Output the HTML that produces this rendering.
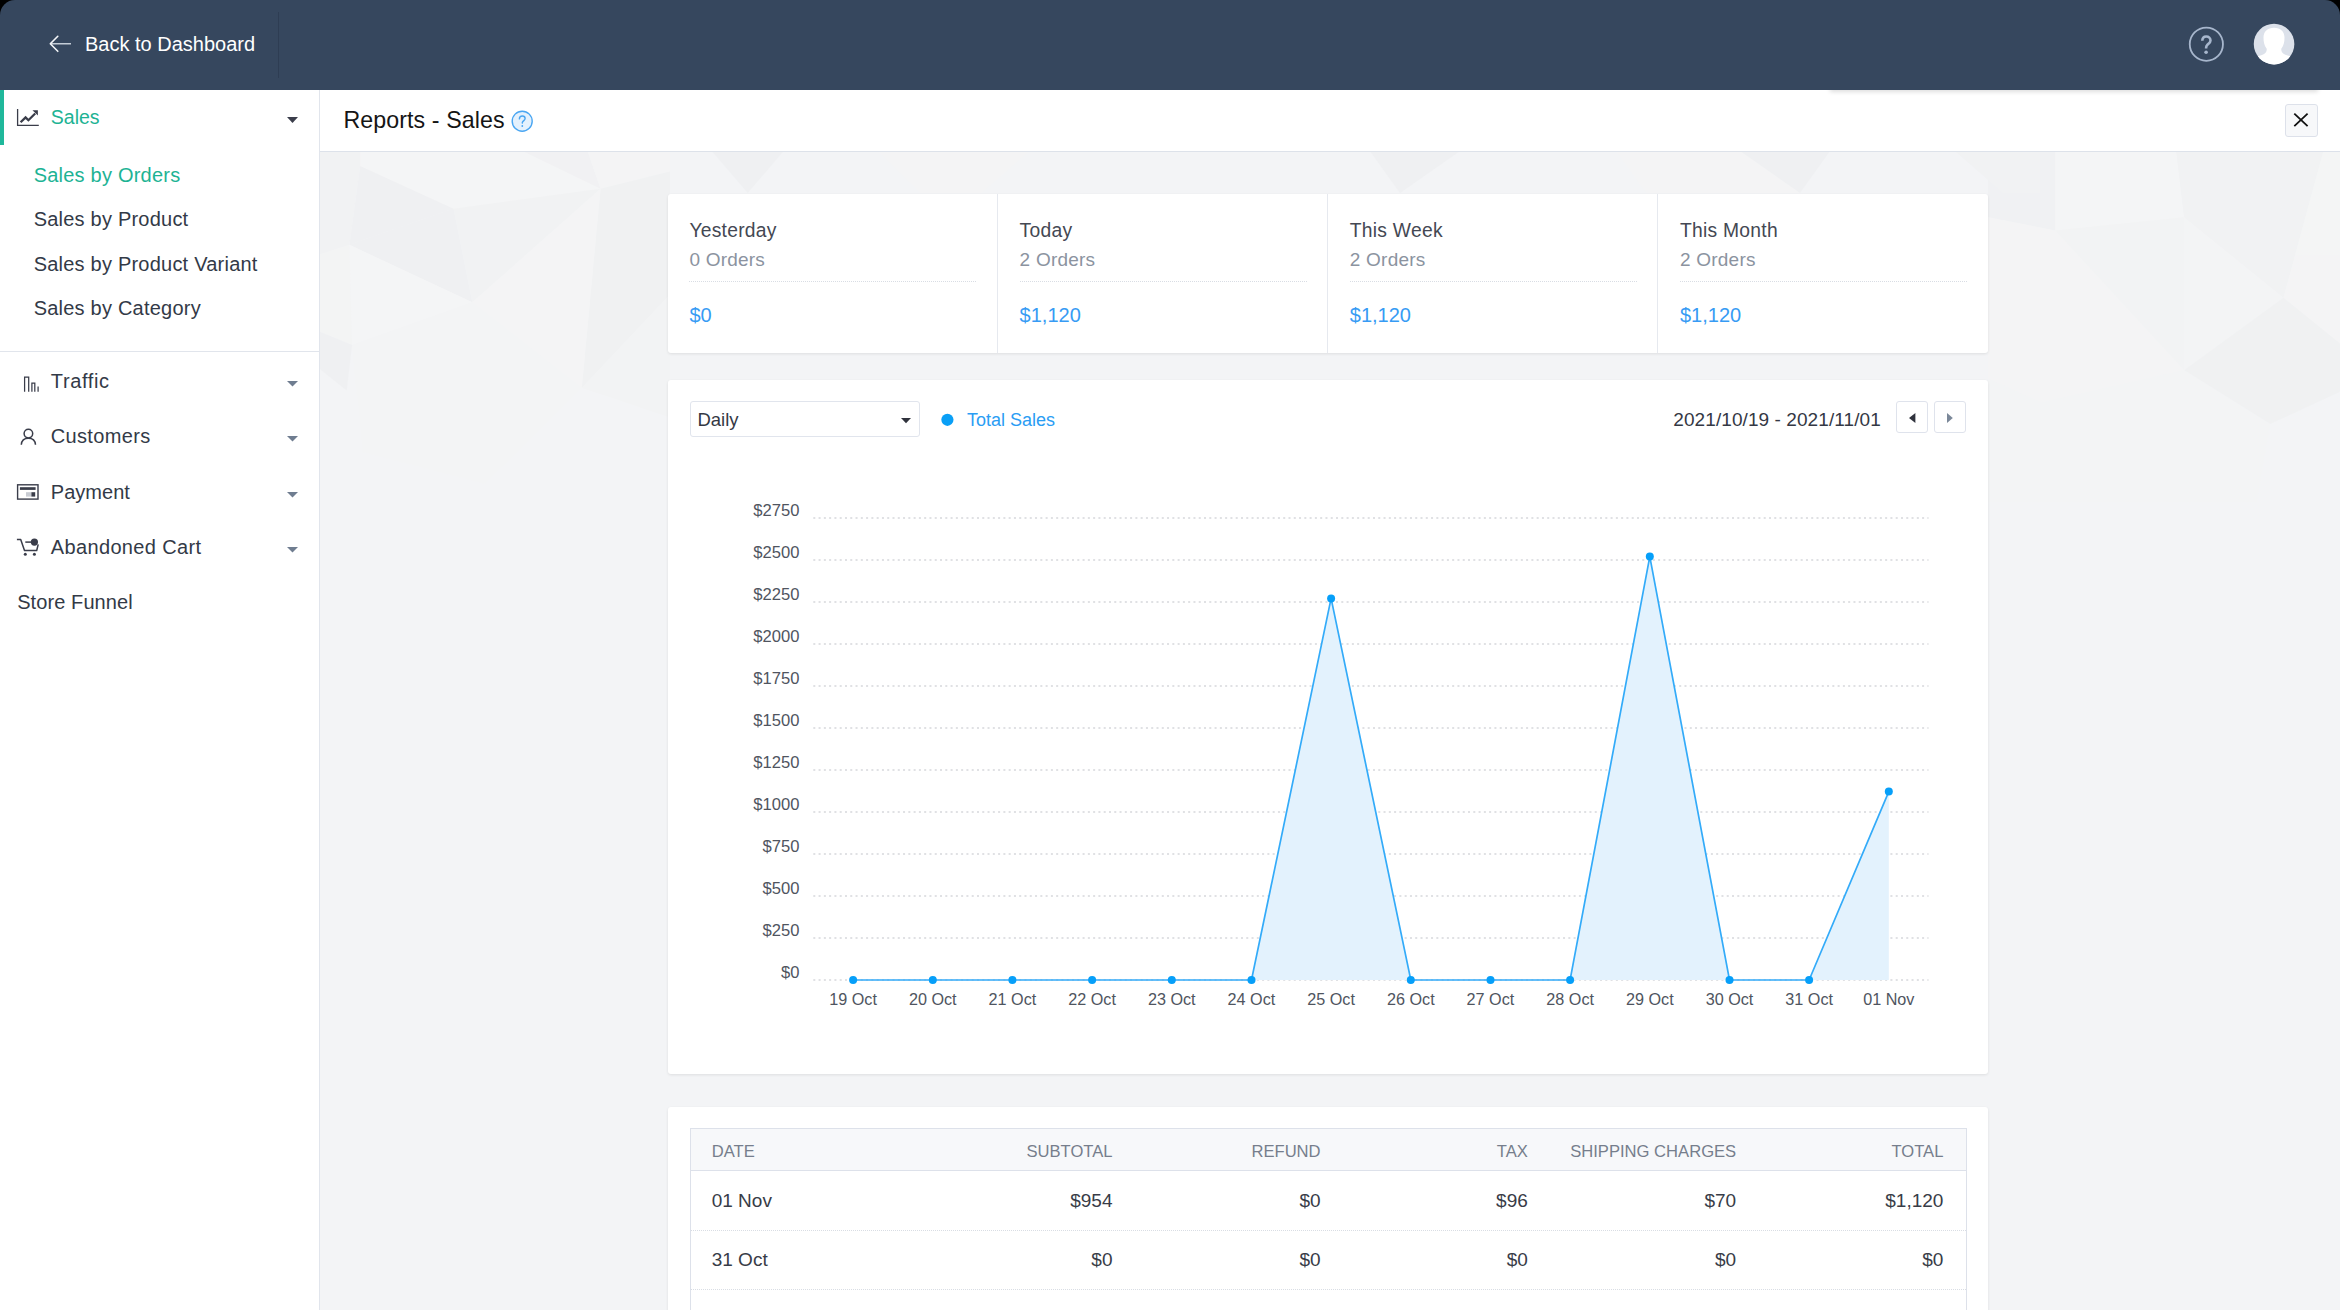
<!DOCTYPE html>
<html><head><meta charset="utf-8"><title>Reports - Sales</title>
<style>
html,body{margin:0;padding:0;}
body{width:2340px;height:1310px;overflow:hidden;position:relative;background:#000;font-family:"Liberation Sans",sans-serif;}
#app{position:absolute;left:0;top:0;width:2340px;height:1310px;background:transparent;overflow:hidden;border-radius:15px 15px 0 0;}
.t{position:absolute;white-space:nowrap;}
.r{position:absolute;box-sizing:border-box;}
svg.r{overflow:visible;}
</style></head><body><div id="app">
<div class="r" style="left:0px;top:90px;width:2340px;height:1220px;background:#f3f4f6;"></div>
<div class="r" style="left:0px;top:0px;width:2340px;height:90px;background:#36475e;"></div>
<svg class="r" style="left:44px;top:30px" width="32" height="28" viewBox="44 30 32 28">
<path d="M71 43.8 H51" stroke="#c3ccd6" stroke-width="1.6" fill="none"/>
<path d="M57.8 36.3 L50.3 43.8 L57.8 51.3" stroke="#f4f6f9" stroke-width="1.6" fill="none" stroke-linecap="round" stroke-linejoin="round"/>
</svg>
<div class="t" style="top:32.47px;font-size:20px;line-height:24.0px;color:#ffffff;left:85.00px;">Back to Dashboard</div>
<div class="r" style="left:278px;top:12px;width:1px;height:66px;background:#2e3d53;"></div>
<svg class="r" style="left:2186px;top:24px" width="40" height="40" viewBox="2186 24 40 40">
<circle cx="2206.35" cy="44.2" r="16.6" stroke="#a7b6cc" stroke-width="1.8" fill="none"/>
<path d="M2202.3 40.8 C2202.3 37.9 2204.1 36.5 2206.3 36.5 C2208.7 36.5 2210.5 38.1 2210.5 40.4 C2210.5 42.6 2208.6 43.6 2207.3 44.9 C2206.5 45.7 2206.1 46.6 2206.1 47.9 L2206.1 48.6" stroke="#a7b6cc" stroke-width="2.6" fill="none"/>
<circle cx="2206.1" cy="52.3" r="1.8" fill="#a7b6cc"/>
</svg>
<svg class="r" style="left:2252px;top:22px" width="44" height="44" viewBox="2252 22 44 44">
<defs><clipPath id="av"><circle cx="2274.05" cy="44.1" r="20.3"/></clipPath></defs>
<circle cx="2274.05" cy="44.1" r="20.3" fill="#dce1ea"/>
<g clip-path="url(#av)" fill="#ffffff">
<path d="M2274 27.7 C2280.5 27.7 2284.5 31.5 2284.5 37.5 C2284.5 42 2283.8 45.5 2281.3 48.8 C2281 51.5 2282.5 53.5 2286 55 C2290 56.3 2294 56.8 2296 57.2 L2296 70 L2252 70 L2252 57.2 C2254 56.8 2258 56.3 2262 55 C2265.5 53.5 2267 51.5 2266.7 48.8 C2264.2 45.5 2263.5 42 2263.5 37.5 C2263.5 31.5 2267.5 27.7 2274 27.7 Z"/>
</g>
</svg>
<div class="r" style="left:0px;top:90px;width:319px;height:1220px;background:#ffffff;"></div>
<div class="r" style="left:319px;top:90px;width:1px;height:1220px;background:#e1e5ec;"></div>
<div class="r" style="left:0px;top:90px;width:4px;height:55px;background:#1fb89b;"></div>
<svg class="r" style="left:15px;top:106px" width="28" height="22" viewBox="15 106 28 22">
<path d="M17.6 109 V125.3 H38.8" stroke="#3a3d4a" stroke-width="1.3" fill="none"/>
<path d="M20.6 122.3 L25.6 117.4 L28.4 120.2 L35.2 113.5" stroke="#3a3d4a" stroke-width="2.3" fill="none"/>
<path d="M32.5 110.2 H37.9 V115.6 Z" fill="#3a3d4a"/>
</svg>
<div class="t" style="top:105.54px;font-size:19.5px;line-height:23.4px;color:#1db394;left:50.80px;">Sales</div>
<svg class="r" style="left:287px;top:117px" width="11" height="6" viewBox="0 0 11 6"><path d="M0 0 H11 L5.5 6 Z" fill="#3b3e4b"/></svg>
<div class="t" style="top:162.77px;font-size:20px;line-height:24.0px;color:#1db394;letter-spacing:0.22px;left:33.70px;">Sales by Orders</div>
<div class="t" style="top:206.87px;font-size:20px;line-height:24.0px;color:#333a47;letter-spacing:0.22px;left:33.70px;">Sales by Product</div>
<div class="t" style="top:251.77px;font-size:20px;line-height:24.0px;color:#333a47;letter-spacing:0.22px;left:33.70px;">Sales by Product Variant</div>
<div class="t" style="top:295.87px;font-size:20px;line-height:24.0px;color:#333a47;letter-spacing:0.22px;left:33.70px;">Sales by Category</div>
<div class="r" style="left:0px;top:351px;width:319px;height:1px;background:#e1e5ec;"></div>
<div class="t" style="top:368.67px;font-size:20px;line-height:24.0px;color:#333a47;letter-spacing:0.62px;left:50.80px;">Traffic</div>
<svg class="r" style="left:287px;top:380.5px" width="11" height="5.5" viewBox="0 0 11 5.5"><path d="M0 0 H11 L5.5 5.5 Z" fill="#6f7d90"/></svg>
<div class="t" style="top:424.17px;font-size:20px;line-height:24.0px;color:#333a47;letter-spacing:0.33px;left:50.80px;">Customers</div>
<svg class="r" style="left:287px;top:436.1px" width="11" height="5.5" viewBox="0 0 11 5.5"><path d="M0 0 H11 L5.5 5.5 Z" fill="#6f7d90"/></svg>
<div class="t" style="top:479.77px;font-size:20px;line-height:24.0px;color:#333a47;letter-spacing:0.02px;left:50.80px;">Payment</div>
<svg class="r" style="left:287px;top:491.7px" width="11" height="5.5" viewBox="0 0 11 5.5"><path d="M0 0 H11 L5.5 5.5 Z" fill="#6f7d90"/></svg>
<div class="t" style="top:535.37px;font-size:20px;line-height:24.0px;color:#333a47;letter-spacing:0.35px;left:50.80px;">Abandoned Cart</div>
<svg class="r" style="left:287px;top:547.3px" width="11" height="5.5" viewBox="0 0 11 5.5"><path d="M0 0 H11 L5.5 5.5 Z" fill="#6f7d90"/></svg>
<svg class="r" style="left:20px;top:372px" width="22" height="22" viewBox="20 372 22 22">
<path d="M24.6 391.8 V377.2 H28.7 V391.8 M31.9 391.8 V383.1 H34.8 V391.8 M38.1 391.8 V386.6" stroke="#3a3d4a" stroke-width="1.25" fill="none"/>
</svg>
<svg class="r" style="left:18px;top:426px" width="22" height="22" viewBox="18 426 22 22">
<circle cx="28.4" cy="433.6" r="4.3" stroke="#3a3d4a" stroke-width="1.5" fill="none"/>
<path d="M21.3 444.8 C21.6 440.6 24.5 438.3 28.4 438.3 C32.3 438.3 35.2 440.6 35.5 444.8" stroke="#3a3d4a" stroke-width="1.5" fill="none"/>
</svg>
<svg class="r" style="left:15px;top:482px" width="26" height="20" viewBox="15 482 26 20">
<rect x="17.6" y="484.8" width="20.4" height="14.3" stroke="#3a3d4a" stroke-width="1.4" fill="none"/>
<rect x="19.9" y="487.2" width="15.7" height="2.7" fill="#3a3d4a"/>
<rect x="26" y="492.2" width="5.4" height="4.4" fill="#c9ccd3"/>
<rect x="31.4" y="492.2" width="3.8" height="4.4" fill="#3a3d4a"/>
</svg>
<svg class="r" style="left:15px;top:536px" width="26" height="22" viewBox="15 536 26 22">
<path d="M16.9 539.4 H20.7 L24.5 550.5 H36.7 L38.2 544.4" stroke="#3a3d4a" stroke-width="1.5" fill="none" stroke-linejoin="round"/>
<path d="M25.3 542.1 H32" stroke="#3a3d4a" stroke-width="1.5" fill="none"/>
<circle cx="34.4" cy="542.1" r="3.6" fill="#3a3d4a"/>
<circle cx="25.3" cy="554.3" r="1.5" fill="#3a3d4a"/>
<circle cx="34.4" cy="554.3" r="1.5" fill="#3a3d4a"/>
</svg>
<div class="t" style="top:589.67px;font-size:20px;line-height:24.0px;color:#333a47;letter-spacing:0.09px;left:17.20px;">Store Funnel</div>
<div class="r" style="left:320px;top:90px;width:2020px;height:61px;background:#ffffff;"></div>
<div class="r" style="left:320px;top:151px;width:2020px;height:1px;background:#dde2ea;"></div>
<div class="r" style="left:1800px;top:90px;width:540px;height:12px;overflow:hidden"><div class="r" style="left:30px;top:-10px;width:488px;height:10px;background:#36475e;box-shadow:0 2px 4px rgba(0,0,0,0.13)"></div></div>
<div class="t" style="top:106.54px;font-size:23.2px;line-height:27.84px;color:#151515;letter-spacing:0.1px;left:343.40px;">Reports - Sales</div>
<svg class="r" style="left:510px;top:109px" width="24" height="24" viewBox="510 109 24 24">
<circle cx="522.2" cy="121.2" r="10" stroke="#4aa6f2" stroke-width="1.4" fill="#e4f1fd"/>
<path d="M519.4 118.9 C519.4 116.9 520.7 116 522.3 116 C524 116 525.1 117.1 525.1 118.6 C525.1 120.2 523 120.7 522.4 122.3 L522.3 123.1" stroke="#4aa6f2" stroke-width="1.4" fill="none" stroke-linecap="round"/>
<circle cx="522.3" cy="126" r="0.9" fill="#4aa6f2"/>
</svg>
<div class="r" style="left:2284.5px;top:103.5px;width:33px;height:33px;background:#f7f8fa;border:1px solid #dde1ea;border-radius:3px;"></div>
<svg class="r" style="left:2290px;top:109px" width="22" height="22" viewBox="2290 109 22 22">
<path d="M2294.3 113.6 L2307.6 126.2 M2307.6 113.6 L2294.3 126.2" stroke="#111" stroke-width="1.8" fill="none"/>
</svg>
<svg class="r" style="left:0;top:152px;overflow:hidden;opacity:0.6" width="2340" height="1158" viewBox="0 152 2340 1158"><polygon points="320.0,150.0 360.1,150.0 360.1,166.0 349.4,244.8 320.0,254.2" fill="#f0f1f2"/><polygon points="360.1,150.0 587.2,150.0 600.5,188.7 453.6,208.8 360.1,166.0" fill="#f6f6f6"/><polygon points="520.4,150.0 587.2,150.0 600.5,188.7" fill="#f0f0f2"/><polygon points="360.1,166.0 453.6,208.8 349.4,244.8" fill="#eeeff1"/><polygon points="349.4,244.8 453.6,208.8 472.3,302.3" fill="#edeef0"/><polygon points="453.6,208.8 600.5,188.7 472.3,302.3" fill="#f1f2f2"/><polygon points="587.2,150.0 670.0,150.0 670.0,171.4 600.5,188.7" fill="#f5f5f5"/><polygon points="600.5,188.7 670.0,171.4 670.0,294.3 581.8,387.8" fill="#eff0f1"/><polygon points="600.5,188.7 581.8,387.8 472.3,302.3" fill="#f5f5f5"/><polygon points="320.0,254.2 349.4,244.8 352.1,345.0 320.0,331.7" fill="#f3f4f4"/><polygon points="349.4,244.8 472.3,302.3 352.1,345.0" fill="#f6f6f6"/><polygon points="352.1,345.0 472.3,302.3 581.8,387.8 485.6,484.0 362.7,451.9" fill="#f4f4f5"/><polygon points="320.0,331.7 352.1,345.0 346.7,390.4 320.0,369.1" fill="#eeeff1"/><polygon points="670.0,294.3 670.0,417.2 581.8,387.8" fill="#f2f3f3"/><polygon points="1988.0,150.0 2055.2,150.0 2055.2,230.6 1988.0,217.2" fill="#eff0f2"/><polygon points="2055.2,150.0 2176.1,150.0 2184.1,217.2 2055.2,230.6" fill="#f6f6f6"/><polygon points="2176.1,150.0 2323.8,150.0 2283.5,297.8 2184.1,217.2" fill="#f0f1f2"/><polygon points="2323.8,150.0 2340.0,150.0 2340.0,343.4 2283.5,297.8" fill="#f5f5f5"/><polygon points="2055.2,230.6 2184.1,217.2 2184.1,370.3" fill="#f2f3f3"/><polygon points="2184.1,217.2 2283.5,297.8 2184.1,370.3" fill="#f4f4f5"/><polygon points="2184.1,370.3 2283.5,297.8 2340.0,343.4 2340.0,391.8 2270.1,424.0" fill="#eff0f1"/><polygon points="1988.0,217.2 2055.2,230.6 2184.1,370.3 2041.7,402.6 1988.0,378.4" fill="#f5f5f5"/><polygon points="2041.7,402.6 2184.1,370.3 2270.1,424.0 2256.7,502.0 1988.0,502.0 1988.0,378.4" fill="#f3f4f5"/><polygon points="710.8,150.0 784.6,150.0 747.7,193.1" fill="#eeeff1"/><polygon points="876.9,150.0 1030.8,150.0 981.5,193.1 920.0,193.1" fill="#f5f5f5"/><polygon points="1369.2,150.0 1461.5,150.0 1400.0,193.1" fill="#eeeff1"/><polygon points="1615.4,150.0 1769.2,150.0 1800.0,193.1 1646.2,193.1" fill="#f5f5f5"/><polygon points="1738.5,150.0 1830.8,150.0 1800.0,193.1" fill="#eeeff1"/><polygon points="1953.8,150.0 2040.0,150.0 2040.0,193.1 2003.1,193.1" fill="#f0f1f2"/></svg>
<div class="r" style="left:668px;top:194px;width:1320px;height:159px;background:#fff;border-radius:3px;box-shadow:0 1px 3px rgba(0,0,0,0.09);"></div>
<div class="t" style="top:218.93px;font-size:19.3px;line-height:23.16px;color:#444853;letter-spacing:0.25px;left:689.40px;">Yesterday</div>
<div class="t" style="top:248.52px;font-size:19px;line-height:22.8px;color:#8b93a0;letter-spacing:0.22px;left:689.40px;">0 Orders</div>
<div class="r" style="left:689.4px;top:280.5px;width:287px;height:1px;border-top:1px dotted #d9dde4;height:0;"></div>
<div class="t" style="top:303.07px;font-size:20px;line-height:24.0px;color:#379bf4;left:689.40px;">$0</div>
<div class="r" style="left:997px;top:194px;width:1px;height:159px;background:#e6e9ef;"></div>
<div class="t" style="top:218.93px;font-size:19.3px;line-height:23.16px;color:#444853;letter-spacing:0.25px;left:1019.60px;">Today</div>
<div class="t" style="top:248.52px;font-size:19px;line-height:22.8px;color:#8b93a0;letter-spacing:0.22px;left:1019.60px;">2 Orders</div>
<div class="r" style="left:1019.5999999999999px;top:280.5px;width:287px;height:1px;border-top:1px dotted #d9dde4;height:0;"></div>
<div class="t" style="top:303.07px;font-size:20px;line-height:24.0px;color:#379bf4;left:1019.60px;">$1,120</div>
<div class="r" style="left:1327px;top:194px;width:1px;height:159px;background:#e6e9ef;"></div>
<div class="t" style="top:218.93px;font-size:19.3px;line-height:23.16px;color:#444853;letter-spacing:0.25px;left:1349.80px;">This Week</div>
<div class="t" style="top:248.52px;font-size:19px;line-height:22.8px;color:#8b93a0;letter-spacing:0.22px;left:1349.80px;">2 Orders</div>
<div class="r" style="left:1349.8px;top:280.5px;width:287px;height:1px;border-top:1px dotted #d9dde4;height:0;"></div>
<div class="t" style="top:303.07px;font-size:20px;line-height:24.0px;color:#379bf4;left:1349.80px;">$1,120</div>
<div class="r" style="left:1657px;top:194px;width:1px;height:159px;background:#e6e9ef;"></div>
<div class="t" style="top:218.93px;font-size:19.3px;line-height:23.16px;color:#444853;letter-spacing:0.25px;left:1680.00px;">This Month</div>
<div class="t" style="top:248.52px;font-size:19px;line-height:22.8px;color:#8b93a0;letter-spacing:0.22px;left:1680.00px;">2 Orders</div>
<div class="r" style="left:1680.0px;top:280.5px;width:287px;height:1px;border-top:1px dotted #d9dde4;height:0;"></div>
<div class="t" style="top:303.07px;font-size:20px;line-height:24.0px;color:#379bf4;left:1680.00px;">$1,120</div>
<div class="r" style="left:668px;top:380px;width:1320px;height:694px;background:#fff;border-radius:3px;box-shadow:0 1px 3px rgba(0,0,0,0.09);"></div>
<div class="r" style="left:690px;top:401px;width:230px;height:36px;border:1px solid #e1e5ed;border-radius:3px;background:#fff;"></div>
<div class="t" style="top:408.99px;font-size:18.5px;line-height:22.2px;color:#343844;left:697.40px;">Daily</div>
<svg class="r" style="left:901px;top:417.7px" width="10" height="5.2" viewBox="0 0 10 5.2"><path d="M0 0 H10 L5.0 5.2 Z" fill="#2f323c"/></svg>
<svg class="r" style="left:940px;top:413px" width="15" height="15" viewBox="940 413 15 15"><circle cx="947.4" cy="419.8" r="6.1" fill="#0a9ff6"/></svg>
<div class="t" style="top:409.56px;font-size:18px;line-height:21.6px;color:#2a9df4;left:966.90px;">Total Sales</div>
<div class="t" style="top:408.52px;font-size:19px;line-height:22.8px;color:#343844;letter-spacing:0.08px;left:1280.80px;width:600px;text-align:right;">2021/10/19 - 2021/11/01</div>
<div class="r" style="left:1896px;top:401px;width:32px;height:32px;border:1px solid #dfe3ec;border-radius:3px;background:#fff;"></div>
<div class="r" style="left:1934.3px;top:401px;width:32px;height:32px;border:1px solid #dfe3ec;border-radius:3px;background:#fff;"></div>
<svg class="r" style="left:1905px;top:410px" width="60" height="16" viewBox="1905 410 60 16"><path d="M1915.4 413 V423 L1909 418 Z" fill="#2f323c"/><path d="M1947 413 V423 L1952.8 418 Z" fill="#7b8899"/></svg>
<svg class="r" style="left:0;top:0" width="2340" height="1310" viewBox="0 0 2340 1310">
<line x1="813.3" y1="980.0" x2="1928.5" y2="980.0" stroke="#e0e1e4" stroke-width="2" stroke-dasharray="2 3.28"/>
<line x1="813.3" y1="938.0" x2="1928.5" y2="938.0" stroke="#e0e1e4" stroke-width="2" stroke-dasharray="2 3.28"/>
<line x1="813.3" y1="896.0" x2="1928.5" y2="896.0" stroke="#e0e1e4" stroke-width="2" stroke-dasharray="2 3.28"/>
<line x1="813.3" y1="854.0" x2="1928.5" y2="854.0" stroke="#e0e1e4" stroke-width="2" stroke-dasharray="2 3.28"/>
<line x1="813.3" y1="812.0" x2="1928.5" y2="812.0" stroke="#e0e1e4" stroke-width="2" stroke-dasharray="2 3.28"/>
<line x1="813.3" y1="770.0" x2="1928.5" y2="770.0" stroke="#e0e1e4" stroke-width="2" stroke-dasharray="2 3.28"/>
<line x1="813.3" y1="728.0" x2="1928.5" y2="728.0" stroke="#e0e1e4" stroke-width="2" stroke-dasharray="2 3.28"/>
<line x1="813.3" y1="686.0" x2="1928.5" y2="686.0" stroke="#e0e1e4" stroke-width="2" stroke-dasharray="2 3.28"/>
<line x1="813.3" y1="644.0" x2="1928.5" y2="644.0" stroke="#e0e1e4" stroke-width="2" stroke-dasharray="2 3.28"/>
<line x1="813.3" y1="602.0" x2="1928.5" y2="602.0" stroke="#e0e1e4" stroke-width="2" stroke-dasharray="2 3.28"/>
<line x1="813.3" y1="560.0" x2="1928.5" y2="560.0" stroke="#e0e1e4" stroke-width="2" stroke-dasharray="2 3.28"/>
<line x1="813.3" y1="518.0" x2="1928.5" y2="518.0" stroke="#e0e1e4" stroke-width="2" stroke-dasharray="2 3.28"/>
<polygon points="853.1,980.0 853.1,980.0 932.8,980.0 1012.4,980.0 1092.1,980.0 1171.8,980.0 1251.5,980.0 1331.1,598.4 1410.8,980.0 1490.5,980.0 1570.1,980.0 1649.8,556.6 1729.5,980.0 1809.1,980.0 1888.8,791.6 1888.8,980.0" fill="#e3f2fd"/>
<polyline points="853.1,980.0 932.8,980.0 1012.4,980.0 1092.1,980.0 1171.8,980.0 1251.5,980.0 1331.1,598.4 1410.8,980.0 1490.5,980.0 1570.1,980.0 1649.8,556.6 1729.5,980.0 1809.1,980.0 1888.8,791.6" fill="none" stroke="#33abf9" stroke-width="1.7" stroke-linejoin="miter"/>
<circle cx="853.1" cy="980.0" r="4" fill="#069ff9"/>
<circle cx="932.8" cy="980.0" r="4" fill="#069ff9"/>
<circle cx="1012.4" cy="980.0" r="4" fill="#069ff9"/>
<circle cx="1092.1" cy="980.0" r="4" fill="#069ff9"/>
<circle cx="1171.8" cy="980.0" r="4" fill="#069ff9"/>
<circle cx="1251.5" cy="980.0" r="4" fill="#069ff9"/>
<circle cx="1331.1" cy="598.4" r="4" fill="#069ff9"/>
<circle cx="1410.8" cy="980.0" r="4" fill="#069ff9"/>
<circle cx="1490.5" cy="980.0" r="4" fill="#069ff9"/>
<circle cx="1570.1" cy="980.0" r="4" fill="#069ff9"/>
<circle cx="1649.8" cy="556.6" r="4" fill="#069ff9"/>
<circle cx="1729.5" cy="980.0" r="4" fill="#069ff9"/>
<circle cx="1809.1" cy="980.0" r="4" fill="#069ff9"/>
<circle cx="1888.8" cy="791.6" r="4" fill="#069ff9"/>
</svg>
<div class="t" style="top:963.29px;font-size:16.6px;line-height:19.92px;color:#50555f;left:199.50px;width:600px;text-align:right;">$0</div>
<div class="t" style="top:921.29px;font-size:16.6px;line-height:19.92px;color:#50555f;left:199.50px;width:600px;text-align:right;">$250</div>
<div class="t" style="top:879.29px;font-size:16.6px;line-height:19.92px;color:#50555f;left:199.50px;width:600px;text-align:right;">$500</div>
<div class="t" style="top:837.29px;font-size:16.6px;line-height:19.92px;color:#50555f;left:199.50px;width:600px;text-align:right;">$750</div>
<div class="t" style="top:795.29px;font-size:16.6px;line-height:19.92px;color:#50555f;left:199.50px;width:600px;text-align:right;">$1000</div>
<div class="t" style="top:753.29px;font-size:16.6px;line-height:19.92px;color:#50555f;left:199.50px;width:600px;text-align:right;">$1250</div>
<div class="t" style="top:711.29px;font-size:16.6px;line-height:19.92px;color:#50555f;left:199.50px;width:600px;text-align:right;">$1500</div>
<div class="t" style="top:669.29px;font-size:16.6px;line-height:19.92px;color:#50555f;left:199.50px;width:600px;text-align:right;">$1750</div>
<div class="t" style="top:627.29px;font-size:16.6px;line-height:19.92px;color:#50555f;left:199.50px;width:600px;text-align:right;">$2000</div>
<div class="t" style="top:585.29px;font-size:16.6px;line-height:19.92px;color:#50555f;left:199.50px;width:600px;text-align:right;">$2250</div>
<div class="t" style="top:543.29px;font-size:16.6px;line-height:19.92px;color:#50555f;left:199.50px;width:600px;text-align:right;">$2500</div>
<div class="t" style="top:501.29px;font-size:16.6px;line-height:19.92px;color:#50555f;left:199.50px;width:600px;text-align:right;">$2750</div>
<div class="t" style="top:990.07px;font-size:16.2px;line-height:19.44px;color:#4f5560;left:553.10px;width:600px;text-align:center;">19 Oct</div>
<div class="t" style="top:990.07px;font-size:16.2px;line-height:19.44px;color:#4f5560;left:632.77px;width:600px;text-align:center;">20 Oct</div>
<div class="t" style="top:990.07px;font-size:16.2px;line-height:19.44px;color:#4f5560;left:712.44px;width:600px;text-align:center;">21 Oct</div>
<div class="t" style="top:990.07px;font-size:16.2px;line-height:19.44px;color:#4f5560;left:792.11px;width:600px;text-align:center;">22 Oct</div>
<div class="t" style="top:990.07px;font-size:16.2px;line-height:19.44px;color:#4f5560;left:871.78px;width:600px;text-align:center;">23 Oct</div>
<div class="t" style="top:990.07px;font-size:16.2px;line-height:19.44px;color:#4f5560;left:951.45px;width:600px;text-align:center;">24 Oct</div>
<div class="t" style="top:990.07px;font-size:16.2px;line-height:19.44px;color:#4f5560;left:1031.12px;width:600px;text-align:center;">25 Oct</div>
<div class="t" style="top:990.07px;font-size:16.2px;line-height:19.44px;color:#4f5560;left:1110.79px;width:600px;text-align:center;">26 Oct</div>
<div class="t" style="top:990.07px;font-size:16.2px;line-height:19.44px;color:#4f5560;left:1190.46px;width:600px;text-align:center;">27 Oct</div>
<div class="t" style="top:990.07px;font-size:16.2px;line-height:19.44px;color:#4f5560;left:1270.13px;width:600px;text-align:center;">28 Oct</div>
<div class="t" style="top:990.07px;font-size:16.2px;line-height:19.44px;color:#4f5560;left:1349.80px;width:600px;text-align:center;">29 Oct</div>
<div class="t" style="top:990.07px;font-size:16.2px;line-height:19.44px;color:#4f5560;left:1429.47px;width:600px;text-align:center;">30 Oct</div>
<div class="t" style="top:990.07px;font-size:16.2px;line-height:19.44px;color:#4f5560;left:1509.14px;width:600px;text-align:center;">31 Oct</div>
<div class="t" style="top:990.07px;font-size:16.2px;line-height:19.44px;color:#4f5560;left:1588.81px;width:600px;text-align:center;">01 Nov</div>
<div class="r" style="left:668px;top:1107px;width:1320px;height:260px;background:#fff;border-radius:3px;box-shadow:0 1px 3px rgba(0,0,0,0.09);"></div>
<div class="r" style="left:690px;top:1128px;width:1277px;height:300px;border:1px solid #dde1ea;background:#fff;"></div>
<div class="r" style="left:691px;top:1129px;width:1275px;height:42px;background:#f7f8fa;border-bottom:1px solid #dde1ea;"></div>
<div class="t" style="top:1141.89px;font-size:16.6px;line-height:19.92px;color:#767e8c;left:711.70px;">DATE</div>
<div class="t" style="top:1141.89px;font-size:16.6px;line-height:19.92px;color:#767e8c;left:512.50px;width:600px;text-align:right;">SUBTOTAL</div>
<div class="t" style="top:1141.89px;font-size:16.6px;line-height:19.92px;color:#767e8c;left:720.60px;width:600px;text-align:right;">REFUND</div>
<div class="t" style="top:1141.89px;font-size:16.6px;line-height:19.92px;color:#767e8c;left:927.80px;width:600px;text-align:right;">TAX</div>
<div class="t" style="top:1141.89px;font-size:16.6px;line-height:19.92px;color:#767e8c;left:1136.20px;width:600px;text-align:right;">SHIPPING CHARGES</div>
<div class="t" style="top:1141.89px;font-size:16.6px;line-height:19.92px;color:#767e8c;left:1343.40px;width:600px;text-align:right;">TOTAL</div>
<div class="t" style="top:1190.02px;font-size:19px;line-height:22.8px;color:#383c47;left:711.70px;">01 Nov</div>
<div class="t" style="top:1190.02px;font-size:19px;line-height:22.8px;color:#383c47;left:512.50px;width:600px;text-align:right;">$954</div>
<div class="t" style="top:1190.02px;font-size:19px;line-height:22.8px;color:#383c47;left:720.60px;width:600px;text-align:right;">$0</div>
<div class="t" style="top:1190.02px;font-size:19px;line-height:22.8px;color:#383c47;left:927.80px;width:600px;text-align:right;">$96</div>
<div class="t" style="top:1190.02px;font-size:19px;line-height:22.8px;color:#383c47;left:1136.20px;width:600px;text-align:right;">$70</div>
<div class="t" style="top:1190.02px;font-size:19px;line-height:22.8px;color:#383c47;left:1343.40px;width:600px;text-align:right;">$1,120</div>
<div class="r" style="left:691px;top:1230px;width:1275px;height:0px;border-top:1px dotted #d9dde4;"></div>
<div class="t" style="top:1249.02px;font-size:19px;line-height:22.8px;color:#383c47;left:711.70px;">31 Oct</div>
<div class="t" style="top:1249.02px;font-size:19px;line-height:22.8px;color:#383c47;left:512.50px;width:600px;text-align:right;">$0</div>
<div class="t" style="top:1249.02px;font-size:19px;line-height:22.8px;color:#383c47;left:720.60px;width:600px;text-align:right;">$0</div>
<div class="t" style="top:1249.02px;font-size:19px;line-height:22.8px;color:#383c47;left:927.80px;width:600px;text-align:right;">$0</div>
<div class="t" style="top:1249.02px;font-size:19px;line-height:22.8px;color:#383c47;left:1136.20px;width:600px;text-align:right;">$0</div>
<div class="t" style="top:1249.02px;font-size:19px;line-height:22.8px;color:#383c47;left:1343.40px;width:600px;text-align:right;">$0</div>
<div class="r" style="left:691px;top:1289px;width:1275px;height:0px;border-top:1px dotted #d9dde4;"></div>
</div></body></html>
